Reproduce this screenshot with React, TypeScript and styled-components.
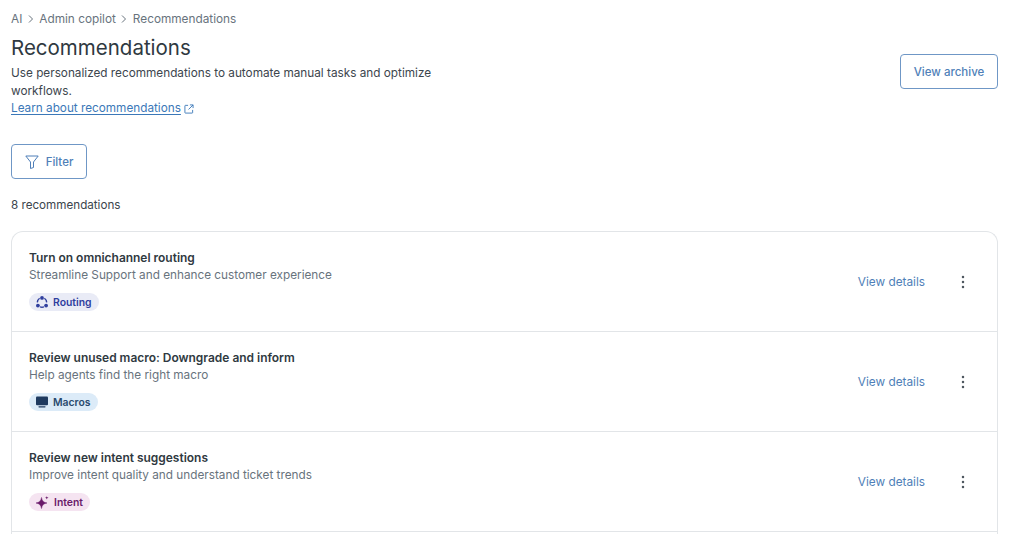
import React from "react";
import styled, { createGlobalStyle } from "styled-components";

const Global = createGlobalStyle`
  html, body { margin: 0; padding: 0; background: #fff; overflow: hidden; height: 534px; }
  body { font-family: Inter, "Liberation Sans", sans-serif; -webkit-font-smoothing: antialiased; }
`;

const Page = styled.div`
  box-sizing: border-box;
  height: 534px;
  padding: 12px 26px 0 11px;
  display: flex;
  flex-direction: column;
`;

const Crumbs = styled.nav`
  display: flex;
  align-items: center;
  height: 14px;
  font-size: 11.8px;
  line-height: 14px;
  color: #68737d;
`;

const Chevron = styled.svg`
  width: 10px;
  height: 12px;
  margin: 0 3.5px;
  flex: none;
`;

const Header = styled.header`
  display: flex;
  justify-content: space-between;
  align-items: flex-start;
  margin-top: 6px;
`;

const Intro = styled.div`
  width: 440px;
`;

const Title = styled.h1`
  margin: 0;
  font-size: 20.5px;
  line-height: 32px;
  font-weight: 400;
  color: #2f3941;
`;

const Description = styled.p`
  margin: 1px 0 0;
  font-size: 11.78px;
  line-height: 17.5px;
  color: #3c454d;
`;

const LearnLink = styled.a`
  display: flex;
  align-items: center;
  gap: 3px;
  font-size: 11.75px;
  line-height: 17px;
  color: #3b78b8;
  text-decoration: underline;
  text-underline-offset: 2px;
`;

const OutlineButton = styled.button`
  display: inline-flex;
  align-items: center;
  justify-content: center;
  box-sizing: border-box;
  background: #fff;
  border: 1px solid #6f97c6;
  border-radius: 4px;
  color: #4f7fb8;
  font-family: inherit;
  font-size: 11.5px;
  font-weight: 500;
  padding: 0;
`;

const ArchiveButton = styled(OutlineButton)`
  width: 98px;
  height: 35px;
  margin-top: 22px;
`;

const FilterRow = styled.div`
  display: flex;
  margin-top: 27px;
`;

const FilterButton = styled(OutlineButton)`
  width: 76px;
  height: 35px;
  gap: 7px;
`;

const Count = styled.div`
  margin-top: 18px;
  font-size: 11.65px;
  line-height: 16px;
  color: #3c454d;
`;

const List = styled.section`
  flex: 1;
  margin-top: 18px;
  border: 1px solid #e2e5e8;
  border-bottom: none;
  border-radius: 12px 12px 0 0;
`;

const Row = styled.article`
  box-sizing: border-box;
  height: 100px;
  display: flex;
  align-items: center;
  justify-content: space-between;
  padding: 0 27px 0 17px;
  border-bottom: 1px solid #e2e5e8;
`;

const RowText = styled.div`
  display: flex;
  flex-direction: column;
  align-items: flex-start;
  padding-bottom: 3px;
`;

const RowTitle = styled.h2`
  margin: 0;
  font-size: 11.96px;
  line-height: 17px;
  font-weight: 600;
  color: #2f3941;
`;

const RowSub = styled.p`
  margin: 1px 0 0;
  font-size: 11.78px;
  line-height: 17px;
  color: #68737d;
`;

const Tag = styled.span<{ $bg: string; $fg: string }>`
  display: inline-flex;
  align-items: center;
  gap: 5px;
  height: 18px;
  margin-top: 9px;
  padding: 0 7px;
  border-radius: 9px;
  background: ${(p) => p.$bg};
  color: ${(p) => p.$fg};
  font-size: 10.4px;
  font-weight: 600;
`;

const RowActions = styled.div`
  display: flex;
  align-items: center;
  gap: 31px;
`;

const DetailsLink = styled.a`
  font-size: 11.8px;
  font-weight: 400;
  color: #4f7fb8;
`;

const Kebab = styled.svg`
  width: 14px;
  height: 14px;
  color: #4f5860;
  display: block;
`;

const ChevronIcon = () => (
  <Chevron viewBox="0 0 10 12" fill="none" stroke="#68737d" strokeWidth="1">
    <path d="M3 2.5l3.5 3.5L3 9.5" />
  </Chevron>
);

const RoutingIcon = () => (
  <svg width="12" height="12" viewBox="0 0 12 12" fill="none" stroke="#2f3e9e">
    <circle cx="6" cy="1.9" r="1.9" fill="#2f3e9e" stroke="none" />
    <circle cx="1.9" cy="9.6" r="1.9" fill="#2f3e9e" stroke="none" />
    <circle cx="10.1" cy="9.6" r="1.9" fill="#2f3e9e" stroke="none" />
    <path d="M3.6 2.2C2.2 3.2 1.4 4.7 1.3 6.4M8.4 2.2c1.4 1 2.2 2.5 2.3 4.2M4 10.9c1.3.4 2.7.4 4 0" strokeWidth="1.4" />
  </svg>
);

const MacroIcon = () => (
  <svg width="12" height="12" viewBox="0 0 12 12" fill="#1f3a5f">
    <rect x="0" y="0.5" width="12" height="8.8" rx="1" />
    <rect x="2.5" y="10.2" width="7" height="1.2" rx="0.4" />
  </svg>
);

const SparkIcon = () => (
  <svg width="13" height="13" viewBox="0 0 13 13" fill="#6a1b6a">
    <path d="M5.5 1.5C6.1 4.9 7.5 6.4 11 7 7.5 7.6 6.1 9.1 5.5 12.5 4.9 9.1 3.5 7.6 0 7 3.5 6.4 4.9 4.9 5.5 1.5z" stroke="#6a1b6a" strokeWidth="0.5" strokeLinejoin="round" />
    <path d="M10.8 0c.2 1.1.6 1.5 1.8 1.7-1.2.2-1.6.6-1.8 1.7-.2-1.1-.6-1.5-1.8-1.7C10.2 1.5 10.6 1.1 10.8 0z" />
  </svg>
);

const items = [
  { title: "Turn on omnichannel routing", sub: "Streamline Support and enhance customer experience", tag: "Routing", bg: "#e9ebf6", fg: "#2f3e9e", icon: <RoutingIcon /> },
  { title: "Review unused macro: Downgrade and inform", sub: "Help agents find the right macro", tag: "Macros", bg: "#dcebf8", fg: "#2a4a6e", icon: <MacroIcon /> },
  { title: "Review new intent suggestions", sub: "Improve intent quality and understand ticket trends", tag: "Intent", bg: "#f5e4f1", fg: "#6a1b6a", icon: <SparkIcon /> },
];

export default function App() {
  return (
    <Page>
      <Global />
      <Crumbs>
        AI<ChevronIcon />Admin copilot<ChevronIcon />Recommendations
      </Crumbs>
      <Header>
        <Intro>
          <Title>Recommendations</Title>
          <Description>
            Use personalized recommendations to automate manual tasks and optimize workflows.
          </Description>
          <LearnLink href="#">
            Learn about recommendations
            <svg width="10" height="10" viewBox="0 0 11 11" fill="none" stroke="#3b78b8" strokeWidth="1">
              <path d="M4.5 1.5H1.5a.5.5 0 0 0-.5.5v7.5a.5.5 0 0 0 .5.5H9a.5.5 0 0 0 .5-.5V6.5M6.5 1H10v3.5M10 1L5 6" />
            </svg>
          </LearnLink>
        </Intro>
        <ArchiveButton>View archive</ArchiveButton>
      </Header>
      <FilterRow>
        <FilterButton>
          <svg width="14" height="14" viewBox="0 0 14 14" fill="none" stroke="#4f7fb8" strokeWidth="1" strokeLinejoin="round">
            <path d="M0.8 1h12.4L8.5 7v5.5L5.5 13.5V7z" />
          </svg>
          Filter
        </FilterButton>
      </FilterRow>
      <Count>8 recommendations</Count>
      <List>
        {items.map((it) => (
          <Row key={it.tag}>
            <RowText>
              <RowTitle>{it.title}</RowTitle>
              <RowSub>{it.sub}</RowSub>
              <Tag $bg={it.bg} $fg={it.fg}>
                {it.icon}
                {it.tag}
              </Tag>
            </RowText>
            <RowActions>
              <DetailsLink>View details</DetailsLink>
              <Kebab viewBox="0 0 14 14" fill="currentColor">
                <circle cx="7" cy="2" r="1.25" />
                <circle cx="7" cy="7" r="1.25" />
                <circle cx="7" cy="12" r="1.25" />
              </Kebab>
            </RowActions>
          </Row>
        ))}
      </List>
    </Page>
  );
}
